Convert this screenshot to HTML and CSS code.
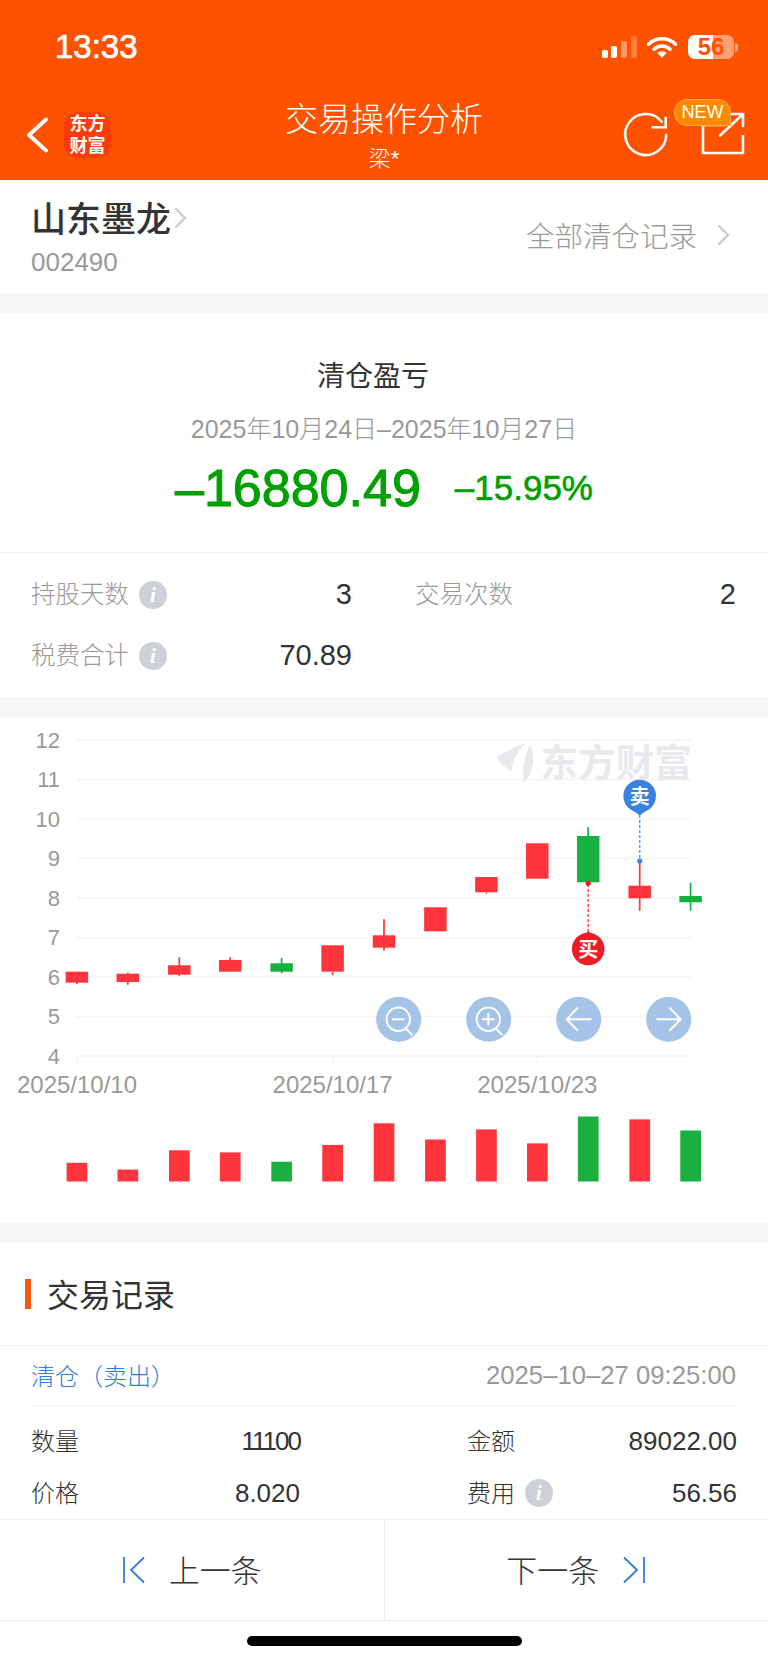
FILE: index.html
```html
<!DOCTYPE html>
<html lang="zh-CN">
<head>
<meta charset="utf-8">
<title>交易操作分析</title>
<link rel="stylesheet" href="styles.css">
</head>
<body>
<div class="app">
  <header class="top">
    <div class="status">
      <span class="clock">13:33</span>
      <div class="status-icons">
        <svg class="signal" viewBox="0 0 36 22" width="36" height="22"><rect x="1" y="14" width="6" height="8" rx="2" fill="#fff"/><rect x="10" y="10" width="6" height="12" rx="2" fill="#fff"/><rect x="20" y="5" width="6" height="17" rx="2" fill="#fff" opacity=".4"/><rect x="30" y="0" width="6" height="22" rx="2" fill="#fff" opacity=".25"/></svg>
        <svg class="wifi" viewBox="0 0 30 22" width="30" height="22"><path d="M1.500 8.200C9 .9 21 .9 28.500 8.200" fill="none" stroke="#fff" stroke-width="3.600" stroke-linecap="round"/><path d="M7 13.200c4.500-4.200 11.500-4.200 16 0" fill="none" stroke="#fff" stroke-width="3.600" stroke-linecap="round"/><path d="M15 22l-4.600-5.200c2.700-2 6.500-2 9.200 0z" fill="#fff"/></svg>
        <div class="battery"><span class="battery-num">56</span></div>
        <span class="battery-tip"></span>
      </div>
    </div>
    <nav class="nav">
      <div class="nav-left">
        <svg class="back" viewBox="0 0 24 36" width="24" height="36"><path d="M20 2.500L3 18l17 15.500" fill="none" stroke="#fff" stroke-width="3.800" stroke-linecap="round" stroke-linejoin="round"/></svg>
        <div class="logo"><span>东方</span><span>财富</span></div>
      </div>
      <div class="nav-title">
        <div class="title">交易操作分析</div>
        <div class="subtitle">梁*</div>
      </div>
      <div class="nav-right">
        <svg class="refresh" viewBox="620 110 52 52" width="52" height="52"><path d="M661.700 121.700A20.500 20.500 0 1 0 666.200 135" fill="none" stroke="#fff" stroke-width="2.600" stroke-linecap="round"/><path d="M651.700 127.300H665.700V116.700" fill="none" stroke="#fff" stroke-width="2.600"/></svg>
        <svg class="share" viewBox="698 112 50 48" width="50" height="48"><path d="M725 127H703V155H743V137" fill="none" stroke="#fff" stroke-width="2.600" stroke-linejoin="round"/><path d="M720 137.500L742.500 116.500M732 116H743V128" fill="none" stroke="#fff" stroke-width="2.600" stroke-linecap="round"/></svg>
        <span class="badge">NEW</span>
      </div>
    </nav>
  </header>

  <main class="content">
    <section class="stock">
      <div class="stock-id">
        <div class="stock-name">山东墨龙<svg class="chev-small" viewBox="0 0 14 22" width="14" height="22"><path d="M2 2l9 9-9 9" fill="none" stroke="#ccc" stroke-width="2.400" stroke-linecap="round"/></svg></div>
        <div class="stock-code">002490</div>
      </div>
      <div class="stock-link">全部清仓记录<svg class="chev-link" viewBox="0 0 14 22" width="14" height="22"><path d="M2 2l9 9-9 9" fill="none" stroke="#ccc" stroke-width="2.400" stroke-linecap="round"/></svg></div>
    </section>

    <section class="panel summary">
      <div class="hero">
        <div class="hero-title">清仓盈亏</div>
        <div class="hero-date">2025年10月24日–2025年10月27日</div>
        <div class="hero-money">
          <span class="money">–16880.49</span>
          <span class="pct">–15.95%</span>
        </div>
      </div>
      <div class="stats">
        <div class="stat"><span class="stat-label">持股天数</span><span class="info">i</span><span class="stat-value">3</span></div>
        <div class="stat"><span class="stat-label">交易次数</span><span class="stat-value">2</span></div>
        <div class="stat"><span class="stat-label">税费合计</span><span class="info">i</span><span class="stat-value">70.89</span></div>
      </div>
    </section>

    <section class="panel chart-panel">
      <svg class="chart" viewBox="0 717 768 506" width="768" height="506">
        <g class="grid">
          <path d="M77 740H691M77 779.500H691M77 819H691M77 858.500H691M77 898H691M77 937.500H691M77 977H691M77 1016.500H691M77 1056H691M77 1056V1066M332.600 1056V1066M537.300 1056V1066"/>
        </g>
        <g class="ylabels">
          <text x="60" y="748">12</text><text x="60" y="787">11</text><text x="60" y="827">10</text><text x="60" y="866">9</text><text x="60" y="906">8</text><text x="60" y="945">7</text><text x="60" y="985">6</text><text x="60" y="1024">5</text><text x="60" y="1064">4</text>
        </g>
        <g class="xlabels">
          <text x="77" y="1093">2025/10/10</text><text x="332.600" y="1093">2025/10/17</text><text x="537.300" y="1093">2025/10/23</text>
        </g>
        <g class="watermark">
          <path d="M497 757C505 751 517 746 526 743C517 752 511 762 512 772C507 768 500 765 497 757Z"/>
          <path d="M530 744C535 755 535 770 524 783C522 772 524 757 530 744Z"/>
          <text x="540" y="776">东方财富</text>
        </g>
        <g class="up">
          <path class="wick" d="M76.900 971.700V984M127.800 972.700V984.700M179.300 957.300V976M230.200 957.300V960M332.600 971.700V975M384 919.300V950.700M486.400 892.300V893.700M639.700 863.300V910.700"/>
          <rect x="65.650" y="971.700" width="22.500" height="11"/>
          <rect x="116.550" y="973.700" width="22.500" height="8.300"/>
          <rect x="168.050" y="965.300" width="22.500" height="9.400"/>
          <rect x="218.950" y="960" width="22.500" height="11.700"/>
          <rect x="321.350" y="945.300" width="22.500" height="26.400"/>
          <rect x="372.750" y="935.300" width="22.500" height="12.400"/>
          <rect x="424.150" y="907.300" width="22.500" height="24"/>
          <rect x="475.150" y="877" width="22.500" height="15.300"/>
          <rect x="526.050" y="843.300" width="22.500" height="35.400"/>
          <rect x="628.450" y="885.700" width="22.500" height="12.600"/>
        </g>
        <g class="down">
          <path class="wick" d="M281.600 958V973.300M588.200 827.300V836M690.600 882.700V910.700"/>
          <rect x="270.350" y="963.300" width="22.500" height="8.400"/>
          <rect x="576.950" y="836" width="22.500" height="46.300"/>
          <rect x="679.350" y="896" width="22.500" height="6.300"/>
        </g>
        <g class="buy">
          <path class="dash" d="M588.200 884V932"/>
          <circle cx="588.200" cy="883.300" r="2.600"/>
          <path d="M588.200 931.500L601 940H575.400Z"/>
          <circle cx="588.200" cy="949" r="16.300"/>
          <text x="588.200" y="956.500">买</text>
        </g>
        <g class="sell">
          <path class="dash" d="M639.700 815V860"/>
          <circle cx="639.700" cy="861" r="2.600"/>
          <circle cx="639.700" cy="796" r="16.300"/>
          <path d="M639.700 815.500L627 806H652.400Z"/>
          <text x="639.700" y="803.500">卖</text>
        </g>
        <g class="tool">
          <circle cx="398.700" cy="1019.300" r="22.500"/>
          <circle cx="488.700" cy="1019.300" r="22.500"/>
          <circle cx="578.700" cy="1019.300" r="22.500"/>
          <circle cx="668.700" cy="1019.300" r="22.500"/>
          <g class="tool-ico">
            <circle cx="398.300" cy="1019.300" r="11.700"/>
            <path d="M406.300 1029L411.800 1034.500M392.700 1019.300H403.700"/>
            <circle cx="488.300" cy="1019.300" r="11.700"/>
            <path d="M496.300 1029L501.800 1034.500M482.700 1019.300H493.700M488.300 1013.800V1024.800"/>
            <path d="M566.700 1019.300H590.700M577.300 1008.300L566.700 1019.300L577.300 1030.300"/>
            <path d="M657.300 1019.300H680.700M670 1008.300L680.700 1019.300L670 1030.300"/>
          </g>
        </g>
        <g class="vol-up">
          <rect x="66.600" y="1162.800" width="20.700" height="18.700"/>
          <rect x="117.500" y="1169.600" width="20.700" height="11.900"/>
          <rect x="169" y="1150.300" width="20.700" height="31.200"/>
          <rect x="219.900" y="1152.400" width="20.700" height="29.100"/>
          <rect x="322.300" y="1144.900" width="20.700" height="36.600"/>
          <rect x="373.700" y="1123.300" width="20.700" height="58.200"/>
          <rect x="425.100" y="1139.500" width="20.700" height="42"/>
          <rect x="476.100" y="1129.400" width="20.700" height="52.100"/>
          <rect x="527" y="1143.400" width="20.700" height="38.100"/>
          <rect x="629.400" y="1119.400" width="20.700" height="62.100"/>
        </g>
        <g class="vol-down">
          <rect x="271.300" y="1161.700" width="20.700" height="19.800"/>
          <rect x="577.900" y="1116.500" width="20.700" height="65"/>
          <rect x="680.300" y="1130.500" width="20.700" height="51"/>
        </g>
      </svg>
    </section>

    <section class="panel records">
      <div class="rec-title"><span class="rec-mark"></span><span class="rec-text">交易记录</span></div>
      <div class="rec-head"><span class="rec-type">清仓（卖出）</span><span class="rec-time">2025–10–27 09:25:00</span></div>
      <div class="rec-grid">
        <div class="rec-cell"><span class="rec-label">数量</span><span class="rec-value rec-value-tight">11100</span></div>
        <div class="rec-cell"><span class="rec-label">金额</span><span class="rec-value">89022.00</span></div>
        <div class="rec-cell"><span class="rec-label">价格</span><span class="rec-value">8.020</span></div>
        <div class="rec-cell"><span class="rec-label">费用</span><span class="info">i</span><span class="rec-value">56.56</span></div>
      </div>
    </section>
  </main>

  <footer class="pager">
    <div class="pager-btn pager-prev">
      <svg viewBox="0 0 24 28" width="24" height="28"><path d="M2 1V27" fill="none" stroke="#2f7de1" stroke-width="1.800"/><path d="M22 1.500L9 14l13 12.500" fill="none" stroke="#2f7de1" stroke-width="1.800"/></svg>
      <span>上一条</span>
    </div>
    <div class="pager-btn">
      <span>下一条</span>
      <svg viewBox="0 0 24 28" width="24" height="28"><path d="M22 1V27" fill="none" stroke="#2f7de1" stroke-width="1.800"/><path d="M2 1.500L15 14 2 26.500" fill="none" stroke="#2f7de1" stroke-width="1.800"/></svg>
    </div>
  </footer>
  <div class="home"><span class="home-bar"></span></div>
</div>
</body>
</html>
```
FILE: styles.css
```css
* { box-sizing: border-box; }
html, body { margin: 0; padding: 0; background: #fff; }
body { font-family: "Liberation Sans", "Noto Sans CJK SC", sans-serif; color: #333; }
.app { width: 768px; height: 1663px; display: flex; flex-direction: column; overflow: hidden; }

.top { background: #ff5200; color: #fff; height: 180px; flex: none; }
.status { height: 94px; display: flex; align-items: center; justify-content: space-between; padding: 0 30px 0 55px; }
.clock { font-size: 33px; -webkit-text-stroke: .7px #fff; }
.status-icons { display: flex; align-items: center; }
.signal { margin-right: 10px; }
.wifi { margin-right: 11px; }
.battery { width: 46px; height: 24px; border-radius: 7px; background: linear-gradient(90deg, #fff 0 55%, rgba(255,255,255,.45) 55% 100%); display: flex; align-items: center; justify-content: center; }
.battery-num { color: #ff5200; font-size: 24px; font-weight: 700; }
.battery-tip { width: 3px; height: 9px; margin-left: 1px; border-radius: 0 3px 3px 0; background: rgba(255,255,255,.45); }

.nav { height: 86px; display: grid; grid-template-columns: 1fr auto 1fr; }
.nav-left { display: flex; align-items: center; height: 46px; margin-top: 18px; padding-left: 26px; }
.back { margin-right: 14px; }
.logo { width: 47px; height: 46px; border-radius: 14px; background: #f93c0a; display: flex; flex-direction: column; align-items: center; justify-content: center; font-size: 18px; font-weight: 700; line-height: 22px; }
.logo span { display: block; }
.nav-title { text-align: center; padding-top: 4px; }
.title { font-size: 33px; line-height: 44px; font-weight: 300; }
.subtitle { font-size: 22px; line-height: 34px; font-weight: 300; }
.nav-right { position: relative; display: flex; align-items: flex-start; justify-content: flex-end; padding: 16px 20px 0 0; }
.refresh { margin-right: 26px; }
.badge { position: absolute; right: 37px; top: 5px; width: 57px; height: 27px; border-radius: 13px 13px 0 13px; background: #ff8a00; border: 1px solid #ffab4d; color: #fff; font-size: 18px; line-height: 25px; text-align: center; }

.content { flex: 1; min-height: 0; overflow: hidden; background: #f7f7f7; display: flex; flex-direction: column; gap: 20px; }
.panel, .stock { background: #fff; flex: none; }

.stock { height: 113px; display: flex; justify-content: space-between; align-items: center; padding: 0 37px 0 31px; }
.stock-id { align-self: flex-start; padding-top: 16px; }
.stock-name { font-size: 35px; font-weight: 500; line-height: 48px; display: flex; align-items: center; }
.chev-small { margin: -4px 0 0 3px; }
.stock-code { font-size: 26px; line-height: 36px; color: #999; }
.stock-link { font-size: 28.500px; font-weight: 300; color: #999; display: flex; align-items: center; padding-bottom: 4px; }
.chev-link { margin-left: 20px; }

.summary { height: 384px; }
.hero { height: 240px; padding-top: 44px; border-bottom: 1.5px solid #eee; text-align: center; }
.hero-title { font-size: 28px; line-height: 40px; font-weight: 400; padding-right: 22px; }
.hero-date { font-size: 25px; line-height: 36px; margin-top: 14px; color: #999; font-weight: 300; }
.hero-money { margin-top: 11px; height: 60px; display: flex; align-items: center; justify-content: center; gap: 34px; color: #00a000; }
.money { font-size: 52px; -webkit-text-stroke: 1px #00a000; }
.pct { font-size: 35px; -webkit-text-stroke: .6px #00a000; }
.stats { display: grid; grid-template-columns: 321px 321px; column-gap: 63px; grid-auto-rows: 61px; padding: 11px 32px 0 31px; }
.stat { display: flex; align-items: center; }
.stat-label { font-size: 24.500px; color: #999; font-weight: 300; padding-bottom: 4px; }
.stat-value { font-size: 29px; margin-left: auto; color: #333; }
.info { width: 28px; height: 28px; border-radius: 50%; background: #cdd0d6; margin-left: 10px; color: #fff; font-family: "Liberation Serif", serif; font-style: italic; font-weight: 700; font-size: 21px; line-height: 28px; text-align: center; }

.chart-panel { height: 506px; }
.chart { display: block; }
.grid path { fill: none; stroke: #f4f4f4; stroke-width: 1.500; }
.ylabels text { font-size: 22px; fill: #999; text-anchor: end; }
.xlabels text { font-size: 24px; fill: #999; text-anchor: middle; }
.watermark { fill: #e9e9ed; }
.watermark text { font-size: 38px; font-weight: 700; }
.up rect, .vol-up rect { fill: #ff343c; }
.down rect, .vol-down rect { fill: #18b03e; }
.wick { fill: none; stroke-width: 1.700; }
.up .wick { stroke: #ff343c; }
.down .wick { stroke: #18b03e; }
.buy { fill: #ee1c25; }
.sell { fill: #3a82e0; }
.dash { fill: none; stroke-width: 1.500; stroke-dasharray: 3 2; }
.buy .dash { stroke: #ff4a50; }
.sell .dash { stroke: #5a9bee; }
.buy text, .sell text { fill: #fff; font-size: 20px; font-weight: 700; text-anchor: middle; }
.tool { fill: #a4c3e6; }
.tool-ico circle, .tool-ico path { fill: none; stroke: #fff; stroke-width: 2; stroke-linecap: round; stroke-linejoin: round; }

.records { flex: 1 0 auto; }
.rec-title { height: 103px; display: flex; align-items: center; padding: 0 0 0 24.500px; border-bottom: 1.5px solid #f2f2f2; }
.rec-mark { width: 6.500px; height: 30px; background: #f05a10; }
.rec-text { font-size: 32px; margin-left: 16px; font-weight: 400; padding-bottom: 2px; }
.rec-head { height: 60px; margin: 0 31px; display: flex; align-items: center; justify-content: space-between; border-bottom: 1.5px solid #f2f2f2; }
.rec-type { font-size: 24px; color: #2f7de1; font-weight: 300; padding-bottom: 3px; }
.rec-time { font-size: 25.700px; color: #999; padding-right: 1px; }
.rec-grid { display: grid; grid-template-columns: 269px 270px; column-gap: 167px; grid-auto-rows: 52px; padding: 9px 31px 0; }
.rec-cell { display: flex; align-items: center; }
.rec-label { font-size: 24px; font-weight: 300; padding-bottom: 4px; }
.rec-value { font-size: 26px; margin-left: auto; }
.rec-value-tight { letter-spacing: -2px; }

.pager { flex: none; height: 102px; display: flex; border-top: 1.5px solid #eee; border-bottom: 1.5px solid #eee; background: #fff; }
.pager-btn { flex: 1; display: flex; align-items: center; justify-content: center; gap: 23px; font-size: 31px; font-weight: 300; }
.pager-btn span { padding-bottom: 4px; }
.pager-prev { border-right: 1.5px solid #eee; }
.home { flex: none; height: 42px; background: #fff; padding-top: 15px; display: flex; justify-content: center; align-items: flex-start; }
.home-bar { width: 275px; height: 10px; border-radius: 5px; background: #000; }
```
